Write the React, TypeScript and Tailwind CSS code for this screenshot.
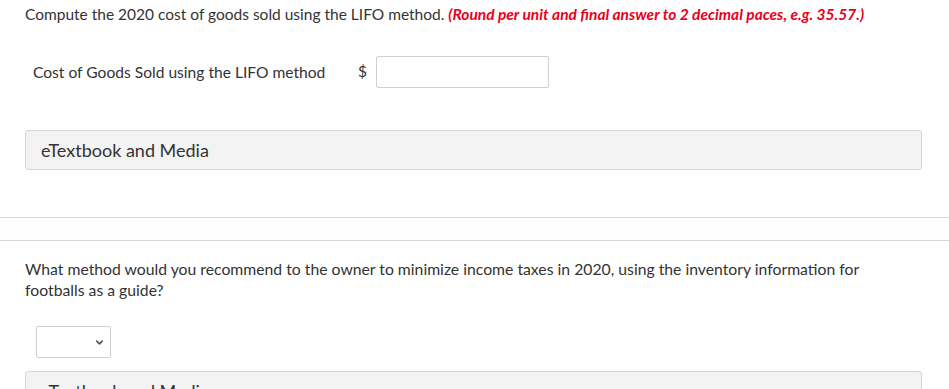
import { ChevronDown } from 'lucide-react'

function MediaBox() {
  return (
    <div className="mr-[27px] flex h-[40px] items-center rounded-[3px] border border-[#d6d6d6] bg-[#f3f3f3] px-[15px] text-[18px] text-[#333]">
      eTextbook and Media
    </div>
  )
}

export default function App() {
  return (
    <div className="h-[389px] w-[949px] overflow-hidden bg-white font-['Lato','Liberation_Sans',sans-serif] text-[#333]">
      <div className="pl-[25px]">
        <p className="pt-[4px] text-[15.5px] leading-[20px]">
          Compute the 2020 cost of goods sold using the LIFO method.{' '}
          <span className="font-bold italic text-[#e8001c]">
            (Round per unit and final answer to 2 decimal paces, e.g. 35.57.)
          </span>
        </p>

        <div className="mt-[32px] flex items-center pl-[8px]">
          <span className="w-[325px] pt-[2px] text-[15.6px]">
            Cost of Goods Sold using the LIFO method
          </span>
          <span className="w-[18px] text-[15.5px]">$</span>
          <input
            type="text"
            className="h-[32px] w-[173px] rounded-[2px] border border-[#cfcfcf] bg-white"
          />
        </div>

        <div className="mt-[42px]">
          <MediaBox />
        </div>
      </div>

      <div className="mt-[47px] h-[24px] border-y border-[#d5d5d5] bg-[#fefefe]" />

      <div className="pl-[25px]">
        <p className="mt-[17px] pr-[70px] text-[15.75px] leading-[21px]">
          What method would you recommend to the owner to minimize income taxes in 2020, using the inventory
          information for footballs as a guide?
        </p>

        <div className="ml-[11px] mt-[26px] flex h-[32px] w-[75px] items-center justify-end rounded-[2px] border border-[#cfcfcf] bg-white pr-[5px]">
          <ChevronDown size={11} strokeWidth={3.5} className="text-[#555]" />
        </div>

        <div className="mt-[13px]">
          <MediaBox />
        </div>
      </div>
    </div>
  )
}
